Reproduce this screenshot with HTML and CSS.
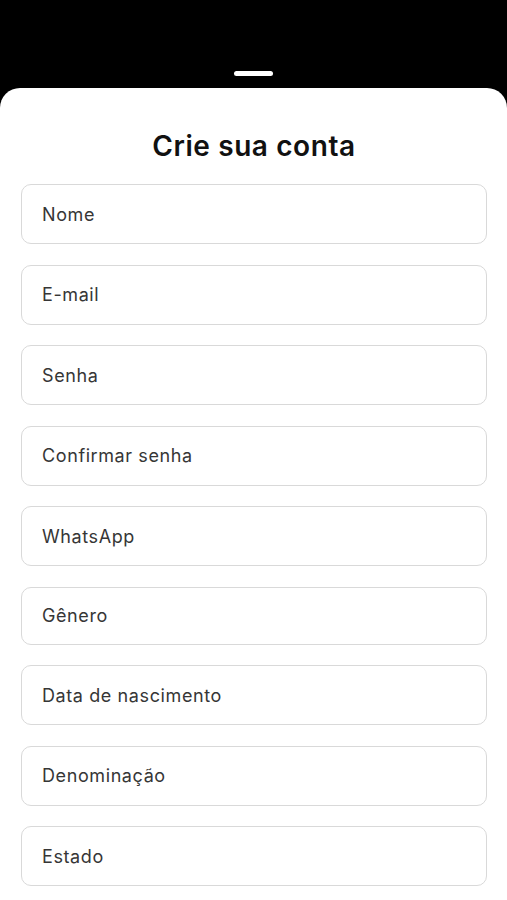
FILE: index.html
```html
<!DOCTYPE html>
<html lang="pt-BR">
<head>
    <meta charset="UTF-8">
    <meta name="viewport" content="width=device-width, initial-scale=1.0">
    <title>Crie sua conta</title>
    <link rel="stylesheet" href="styles.css">
</head>
<body>

<div class="top">
    <div class="handle"></div>
</div>

<div class="sheet">
    <h2>Crie sua conta</h2>

    <form class="fields">
        <input type="text" class="field" placeholder="Nome">
        <input type="email" class="field" placeholder="E-mail">
        <input type="password" class="field" placeholder="Senha">
        <input type="password" class="field" placeholder="Confirmar senha">
        <input type="tel" class="field" placeholder="WhatsApp">
        <div class="field select">Gênero</div>
        <input type="text" class="field" placeholder="Data de nascimento">
        <input type="text" class="field" placeholder="Denominação">
        <div class="field">Estado</div>
    </form>
</div>

</body>
</html>
```

FILE: styles.css
```css
html, body {
    margin: 0;
    padding: 0;
}
body {
    font-family: 'Inter', 'Liberation Sans', sans-serif;
    background: #000;
    color: #111;
    height: 900px;
    overflow: hidden;
}
.top {
    height: 88px;
    display: flex;
    justify-content: center;
    align-items: flex-start;
}
.handle {
    width: 39px;
    height: 5px;
    margin-top: 71px;
    border-radius: 3px;
    background: #fff;
}
.sheet {
    box-sizing: border-box;
    background: #fff;
    border-radius: 20px 20px 0 0;
    padding: 41px 20px 0 21px;
    height: 812px;
}
.sheet h2 {
    margin: 0 0 21px 0;
    text-align: center;
    font-size: 28px;
    line-height: 34px;
    font-weight: 600;
    letter-spacing: 0.6px;
    color: #111;
}
.fields {
    display: flex;
    flex-direction: column;
    gap: 20.5px;
}
.field {
    box-sizing: border-box;
    display: flex;
    align-items: center;
    width: 100%;
    height: 60px;
    margin: 0;
    padding: 0 20px;
    border: 1.5px solid #d9d9d9;
    border-radius: 10px;
    background: #fff;
    font-family: inherit;
    font-size: 18px;
    letter-spacing: 0.6px;
    color: #363636;
    outline: none;
}
.field::placeholder {
    color: #363636;
    opacity: 1;
}
.select {
    height: 58px;
}
```
